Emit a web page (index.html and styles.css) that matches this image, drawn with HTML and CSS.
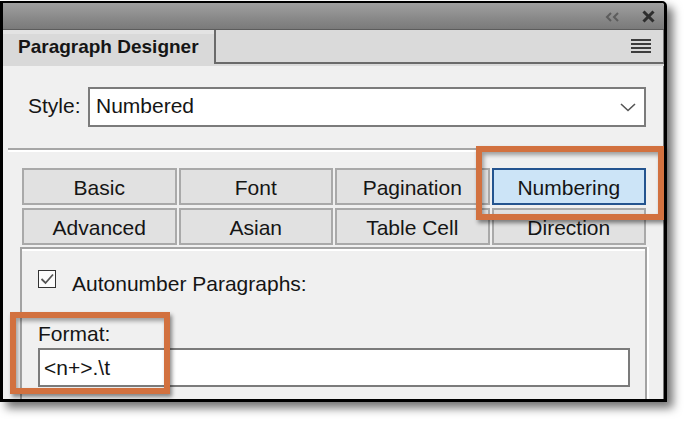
FILE: index.html
```html
<!DOCTYPE html>
<html lang="en">
<head>
    <meta charset="UTF-8">
    <title>Paragraph Designer</title>
    <link rel="stylesheet" href="styles.css">
</head>
<body>
    <div class="window">
        <div class="title-bar">
            <svg class="collapse-icon" width="14" height="10" viewBox="0 0 14 10">
                <polyline points="6,1 2,5 6,9" fill="none" stroke="#555" stroke-width="2"/>
                <polyline points="13,1 9,5 13,9" fill="none" stroke="#555" stroke-width="2"/>
            </svg>
            <svg class="close-icon" width="13" height="13" viewBox="0 0 13 13">
                <line x1="1.5" y1="1.5" x2="11.5" y2="11.5" stroke="#2e2e2e" stroke-width="3"/>
                <line x1="11.5" y1="1.5" x2="1.5" y2="11.5" stroke="#2e2e2e" stroke-width="3"/>
            </svg>
        </div>

        <div class="tab-strip">
            <div class="panel-tab">Paragraph Designer</div>
            <div class="tab-rest">
                <svg width="20" height="14" viewBox="0 0 20 14">
                    <rect x="0" y="0" width="20" height="2" fill="#3d3d3d"/>
                    <rect x="0" y="4" width="20" height="2" fill="#3d3d3d"/>
                    <rect x="0" y="8" width="20" height="2" fill="#3d3d3d"/>
                    <rect x="0" y="12" width="20" height="2" fill="#3d3d3d"/>
                </svg>
            </div>
        </div>

        <div class="content">
            <div class="style-row">
                <span class="style-label">Style:</span>
                <div class="select-box">
                    <span>Numbered</span>
                    <svg width="16" height="9" viewBox="0 0 16 9">
                        <polyline points="1,1 8,7.5 15,1" fill="none" stroke="#555" stroke-width="1.6"/>
                    </svg>
                </div>
            </div>

            <div class="separator"></div>

            <div class="tabs">
                <div class="tab">Basic</div>
                <div class="tab">Font</div>
                <div class="tab">Pagination</div>
                <div class="tab active">Numbering</div>
                <div class="tab">Advanced</div>
                <div class="tab">Asian</div>
                <div class="tab">Table Cell</div>
                <div class="tab">Direction</div>
            </div>

            <div class="tab-panel">
                <div class="check-row">
                    <div class="checkbox">
                        <svg width="16" height="16" viewBox="0 0 16 16">
                            <polyline points="2.5,8 6.5,12 14,3.5" fill="none" stroke="#555" stroke-width="1.8"/>
                        </svg>
                    </div>
                    <span class="check-label">Autonumber Paragraphs:</span>
                </div>
                <div class="format-label">Format:</div>
                <div class="format-input">&lt;n+&gt;.\t</div>
            </div>
        </div>
    </div>

    <!-- callout boxes drawn over the screenshot -->
    <div class="callout callout-tab"></div>
    <div class="callout callout-format"></div>
</body>
</html>
```

FILE: styles.css
```css
* {
    box-sizing: border-box;
}
body {
    margin: 0;
    background: #fff;
    font-family: 'Liberation Sans', Arial, sans-serif;
    color: #151515;
    position: relative;
    width: 688px;
    height: 422px;
    overflow: hidden;
}
.window {
    margin-top: 1px;
    width: 667px;
    height: 401px;
    border: 3px solid #000;
    border-top-width: 2px;
    border-top-right-radius: 5px;
    box-shadow: 6px 6px 10px rgba(0, 0, 0, 0.55);
    display: flex;
    flex-direction: column;
    overflow: hidden;
    background: #f0f0f0;
}
.title-bar {
    height: 27px;
    flex: none;
    background: linear-gradient(#a0a0a0, #888 60%, #7a7a7a);
    border-bottom: 1px solid #5c5c5c;
    display: flex;
    align-items: center;
    justify-content: flex-end;
    padding-right: 9px;
    gap: 23px;
}
.collapse-icon {
    margin-top: 1px;
    opacity: 0.85;
}
.tab-strip {
    height: 36px;
    flex: none;
    display: flex;
    align-items: flex-start;
    background: #dadada;
}
.panel-tab {
    width: 211px;
    height: 36px;
    padding-left: 15px;
    font-weight: bold;
    font-size: 19px;
    line-height: 33px;
    background: linear-gradient(#e3e3e3 0, #e3e3e3 4px, #d9d9d9 4px);
}
.tab-rest {
    flex: 1;
    height: 34px;
    border-left: 2px solid #6a6a6a;
    border-bottom: 2px solid #6a6a6a;
    border-right: 1px solid #7a7a7a;
    display: flex;
    align-items: center;
    justify-content: flex-end;
    padding-right: 12px;
}
.content {
    flex: 1;
    padding-top: 21px;
    border-right: 1px solid #7a7a7a;
    overflow: hidden;
    font-size: 21px;
}
.style-row {
    display: flex;
    align-items: center;
    padding-left: 25px;
}
.style-label {
    width: 60px;
    line-height: 24px;
    padding-bottom: 2px;
}
.select-box {
    width: 558px;
    height: 40px;
    background: #fff;
    border: 2px solid #7b7b7b;
    display: flex;
    align-items: center;
    justify-content: space-between;
    padding: 0 8px 2px 6px;
    line-height: 24px;
}
.select-box svg {
    margin-top: 2px;
}
.separator {
    margin: 21px 0 0 5px;
    border-top: 2px solid #a6a6a6;
    border-bottom: 2px solid #fff;
}
.tabs {
    margin: 16px 0 0 19px;
    width: 624px;
    display: grid;
    grid-template-columns: repeat(4, 1fr);
    grid-auto-rows: 37px;
    gap: 3px 2px;
}
.tab {
    border: 2px solid #a9a9a9;
    background: #e1e1e1;
    text-align: center;
    line-height: 33px;
    padding-top: 1px;
}
.tab.active {
    background: #cce4f7;
    border-color: #24548f;
}
.tab-panel {
    margin: 2px 0 0 17px;
    width: 627px;
    height: 200px;
    border: 2px solid #a3a3a3;
    box-shadow: inset 0 2px 0 #fff, 2px 0 0 #fff;
    padding: 21px 0 0 16px;
}
.check-row {
    display: flex;
    align-items: flex-start;
    gap: 16px;
}
.checkbox {
    flex: none;
    width: 18px;
    height: 18px;
    border: 1px solid #333;
    background: #fcfcfc;
}
.checkbox svg {
    display: block;
}
.check-label {
    margin-top: 2px;
    line-height: 24px;
}
.format-label {
    margin-top: 26px;
    line-height: 24px;
}
.format-input {
    margin-top: 2px;
    width: 592px;
    height: 39px;
    background: #fff;
    border: 2px solid #7b7b7b;
    padding-left: 4px;
    line-height: 35px;
}
.callout {
    position: absolute;
    border: 6px solid #d2713f;
    box-shadow: 2px 3px 4px rgba(0, 0, 0, 0.45), inset 2px 3px 4px rgba(0, 0, 0, 0.35);
}
.callout-tab {
    left: 476px;
    top: 146px;
    width: 188px;
    height: 74px;
}
.callout-format {
    left: 10px;
    top: 312px;
    width: 160px;
    height: 82px;
}
```
